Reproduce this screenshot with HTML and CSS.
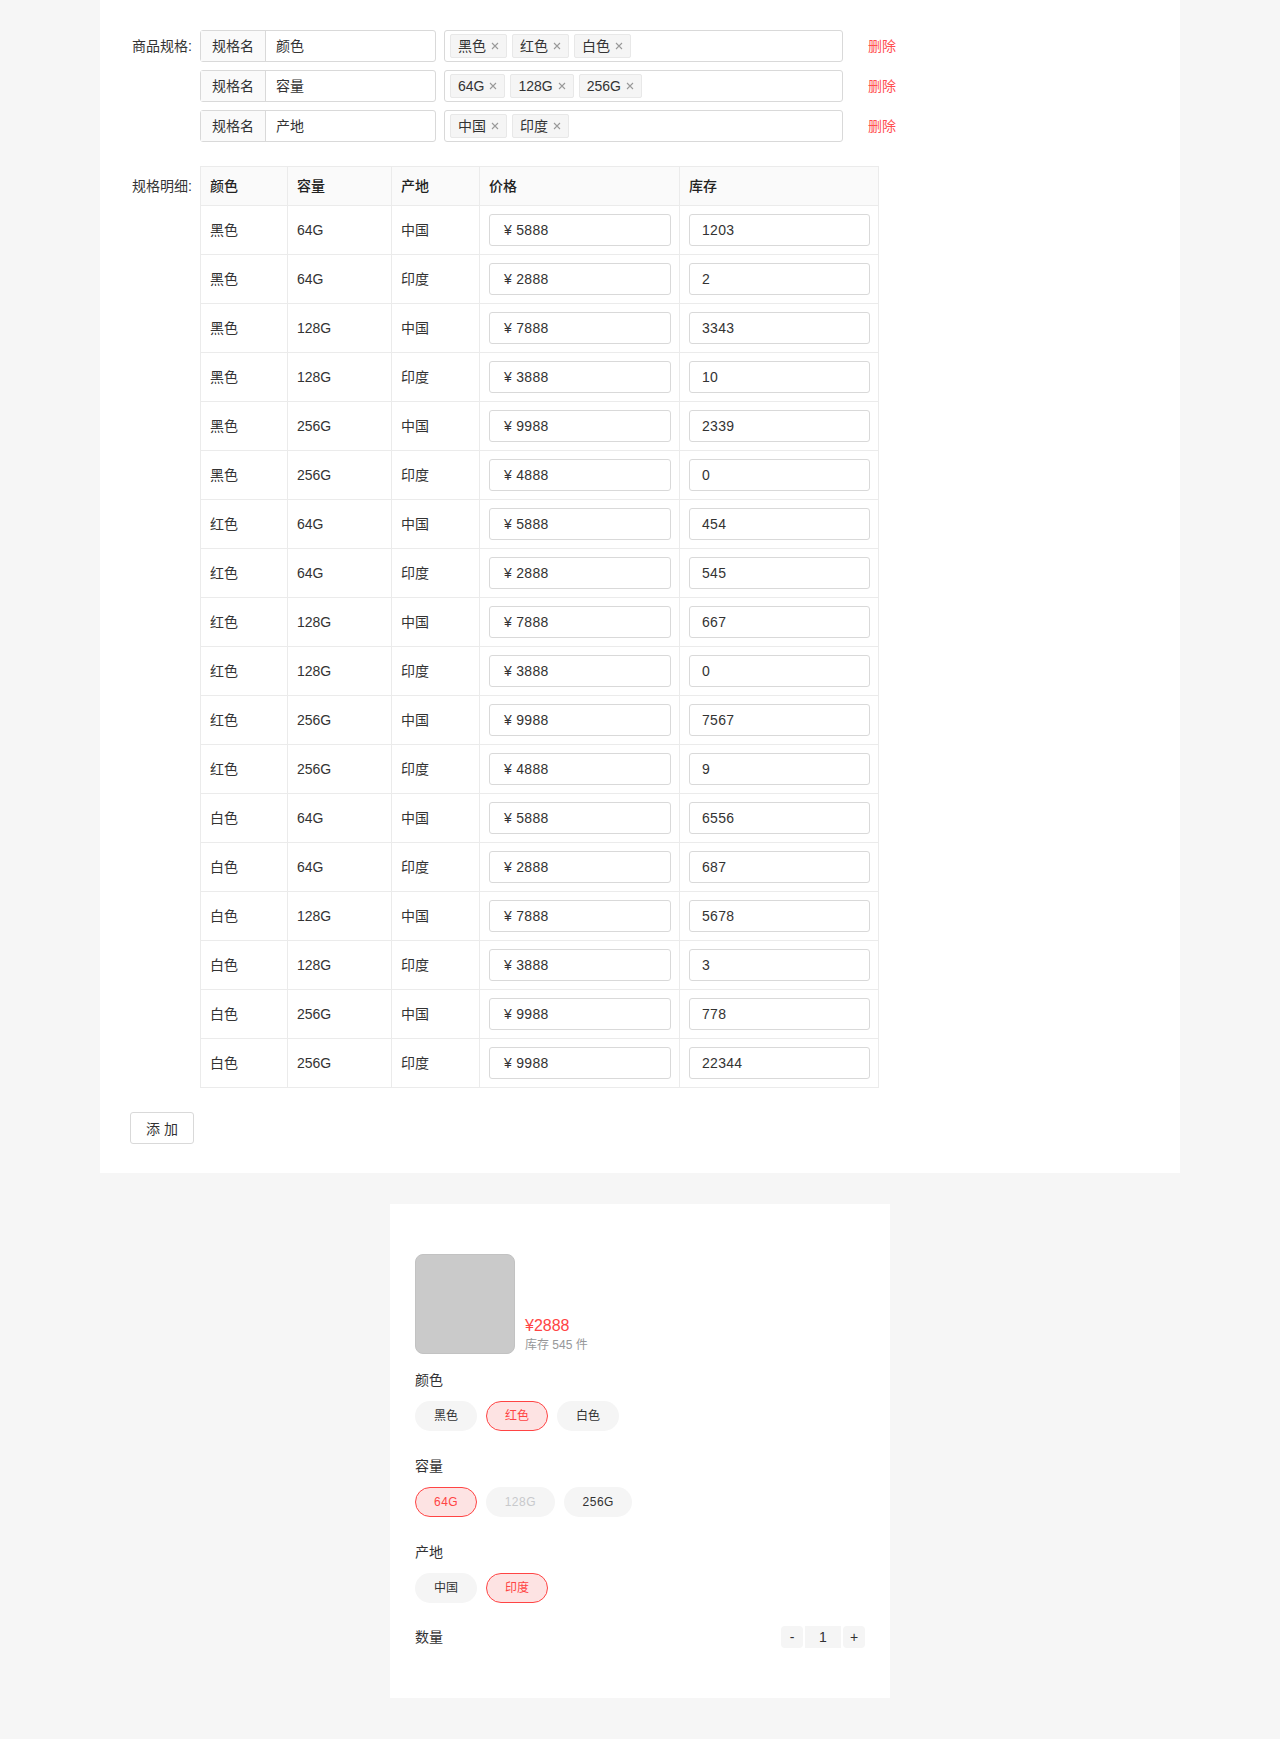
FILE: index.html
```html
<!DOCTYPE html>
<html lang="zh-CN">
<head>
<meta charset="utf-8">
<title>商品规格</title>
<link rel="stylesheet" href="styles.css">
</head>
<body>
<div class="panel">
  <div class="form-row">
    <div class="form-label spec-label">商品规格:</div>
    <div class="spec-list">
      <div class="spec-row">
        <div class="input-group"><span class="addon">规格名</span><span class="ig-input">颜色</span></div>
        <div class="tag-box">
          <span class="tag">黑色<svg class="x" viewBox="0 0 8 8"><path d="M1 1L7 7M7 1L1 7"/></svg></span>
          <span class="tag">红色<svg class="x" viewBox="0 0 8 8"><path d="M1 1L7 7M7 1L1 7"/></svg></span>
          <span class="tag">白色<svg class="x" viewBox="0 0 8 8"><path d="M1 1L7 7M7 1L1 7"/></svg></span>
        </div>
        <a class="del">删除</a>
      </div>
      <div class="spec-row">
        <div class="input-group"><span class="addon">规格名</span><span class="ig-input">容量</span></div>
        <div class="tag-box">
          <span class="tag">64G<svg class="x" viewBox="0 0 8 8"><path d="M1 1L7 7M7 1L1 7"/></svg></span>
          <span class="tag">128G<svg class="x" viewBox="0 0 8 8"><path d="M1 1L7 7M7 1L1 7"/></svg></span>
          <span class="tag">256G<svg class="x" viewBox="0 0 8 8"><path d="M1 1L7 7M7 1L1 7"/></svg></span>
        </div>
        <a class="del">删除</a>
      </div>
      <div class="spec-row">
        <div class="input-group"><span class="addon">规格名</span><span class="ig-input">产地</span></div>
        <div class="tag-box">
          <span class="tag">中国<svg class="x" viewBox="0 0 8 8"><path d="M1 1L7 7M7 1L1 7"/></svg></span>
          <span class="tag">印度<svg class="x" viewBox="0 0 8 8"><path d="M1 1L7 7M7 1L1 7"/></svg></span>
        </div>
        <a class="del">删除</a>
      </div>
    </div>
  </div>

  <div class="form-row detail-row">
    <div class="form-label detail-label">规格明细:</div>
    <table class="sku-table">
      <colgroup><col class="c1"><col class="c2"><col class="c3"><col class="c4"><col class="c5"></colgroup>
      <thead><tr><th>颜色</th><th>容量</th><th>产地</th><th>价格</th><th>库存</th></tr></thead>
      <tbody>
        <tr><td>黑色</td><td>64G</td><td>中国</td><td><div class="cell-input price">¥ 5888</div></td><td><div class="cell-input">1203</div></td></tr>
        <tr><td>黑色</td><td>64G</td><td>印度</td><td><div class="cell-input price">¥ 2888</div></td><td><div class="cell-input">2</div></td></tr>
        <tr><td>黑色</td><td>128G</td><td>中国</td><td><div class="cell-input price">¥ 7888</div></td><td><div class="cell-input">3343</div></td></tr>
        <tr><td>黑色</td><td>128G</td><td>印度</td><td><div class="cell-input price">¥ 3888</div></td><td><div class="cell-input">10</div></td></tr>
        <tr><td>黑色</td><td>256G</td><td>中国</td><td><div class="cell-input price">¥ 9988</div></td><td><div class="cell-input">2339</div></td></tr>
        <tr><td>黑色</td><td>256G</td><td>印度</td><td><div class="cell-input price">¥ 4888</div></td><td><div class="cell-input">0</div></td></tr>
        <tr><td>红色</td><td>64G</td><td>中国</td><td><div class="cell-input price">¥ 5888</div></td><td><div class="cell-input">454</div></td></tr>
        <tr><td>红色</td><td>64G</td><td>印度</td><td><div class="cell-input price">¥ 2888</div></td><td><div class="cell-input">545</div></td></tr>
        <tr><td>红色</td><td>128G</td><td>中国</td><td><div class="cell-input price">¥ 7888</div></td><td><div class="cell-input">667</div></td></tr>
        <tr><td>红色</td><td>128G</td><td>印度</td><td><div class="cell-input price">¥ 3888</div></td><td><div class="cell-input">0</div></td></tr>
        <tr><td>红色</td><td>256G</td><td>中国</td><td><div class="cell-input price">¥ 9988</div></td><td><div class="cell-input">7567</div></td></tr>
        <tr><td>红色</td><td>256G</td><td>印度</td><td><div class="cell-input price">¥ 4888</div></td><td><div class="cell-input">9</div></td></tr>
        <tr><td>白色</td><td>64G</td><td>中国</td><td><div class="cell-input price">¥ 5888</div></td><td><div class="cell-input">6556</div></td></tr>
        <tr><td>白色</td><td>64G</td><td>印度</td><td><div class="cell-input price">¥ 2888</div></td><td><div class="cell-input">687</div></td></tr>
        <tr><td>白色</td><td>128G</td><td>中国</td><td><div class="cell-input price">¥ 7888</div></td><td><div class="cell-input">5678</div></td></tr>
        <tr><td>白色</td><td>128G</td><td>印度</td><td><div class="cell-input price">¥ 3888</div></td><td><div class="cell-input">3</div></td></tr>
        <tr><td>白色</td><td>256G</td><td>中国</td><td><div class="cell-input price">¥ 9988</div></td><td><div class="cell-input">778</div></td></tr>
        <tr><td>白色</td><td>256G</td><td>印度</td><td><div class="cell-input price">¥ 9988</div></td><td><div class="cell-input">22344</div></td></tr>
      </tbody>
    </table>
  </div>

  <button class="add-btn">添 加</button>
</div>

<div class="sku-card">
  <div class="sku-head">
    <div class="sku-img"></div>
    <div class="sku-info">
      <div class="sku-price">¥2888</div>
      <div class="sku-stock">库存 545 件</div>
    </div>
  </div>

  <div class="sku-group">
    <div class="sku-title">颜色</div>
    <div class="chips">
      <span class="chip">黑色</span>
      <span class="chip active">红色</span>
      <span class="chip">白色</span>
    </div>
  </div>
  <div class="sku-group">
    <div class="sku-title">容量</div>
    <div class="chips">
      <span class="chip latin active">64G</span>
      <span class="chip latin disabled">128G</span>
      <span class="chip latin">256G</span>
    </div>
  </div>
  <div class="sku-group">
    <div class="sku-title">产地</div>
    <div class="chips">
      <span class="chip">中国</span>
      <span class="chip active">印度</span>
    </div>
  </div>

  <div class="qty-row">
    <div class="sku-title">数量</div>
    <div class="stepper">
      <span class="step-btn minus">-</span>
      <span class="step-input">1</span>
      <span class="step-btn plus">+</span>
    </div>
  </div>
</div>
</body>
</html>
```

FILE: styles.css
```css
* { box-sizing: border-box; }

body {
  margin: 0;
  background: #f6f6f6;
  font-family: "Liberation Sans", Arial, "Noto Sans CJK SC", sans-serif;
  font-size: 14px;
  color: #333;
}

.panel {
  width: 1080px;
  margin: 0 auto;
  background: #fff;
  padding: 30px 30px 29px;
}

.form-row {
  display: flex;
  align-items: flex-start;
}

.form-label {
  width: 70px;
  flex: none;
  text-align: right;
  padding-right: 8px;
  color: #333;
  white-space: nowrap;
}

.spec-label { line-height: 32px; }
.detail-label { line-height: 40px; }

.spec-list {
  display: flex;
  flex-direction: column;
  gap: 8px;
}

.spec-row {
  display: flex;
  align-items: center;
  height: 32px;
}

.input-group {
  display: flex;
  width: 236px;
  height: 32px;
  border: 1px solid #d9d9d9;
  border-radius: 3px;
  line-height: 30px;
}

.addon {
  width: 65px;
  flex: none;
  background: #fafafa;
  border-right: 1px solid #d9d9d9;
  padding-left: 11px;
  color: #333;
}

.ig-input {
  padding-left: 10px;
  color: #333;
}

.tag-box {
  margin-left: 8px;
  width: 399px;
  height: 32px;
  border: 1px solid #d9d9d9;
  border-radius: 3px;
  padding: 3px 5px;
  display: flex;
  gap: 5px;
}

.tag {
  display: inline-flex;
  align-items: center;
  height: 24px;
  padding: 0 7px 0 7px;
  background: #f5f5f5;
  border: 1px solid #e8e8e8;
  border-radius: 2px;
  color: #333;
  line-height: 22px;
}

.tag .x {
  width: 8px;
  height: 8px;
  margin-left: 5px;
  stroke: #999;
  stroke-width: 1.1;
  fill: none;
}

.del {
  margin-left: 25px;
  color: #ff4d4f;
  line-height: 32px;
}

.detail-row { margin-top: 24px; }

.sku-table {
  width: 678px;
  table-layout: fixed;
  border-collapse: collapse;
  border: 1px solid #ebebeb;
}

.c1 { width: 87px; }
.c2 { width: 104px; }
.c3 { width: 88px; }
.c4 { width: 200px; }
.c5 { width: 199px; }

.sku-table th,
.sku-table td {
  border: 1px solid #ebebeb;
  text-align: left;
  padding: 8px 8px;
}

.sku-table th {
  background: #fafafa;
  font-weight: 500;
  color: #222;
  line-height: 22px;
  padding-left: 9px;
}

.sku-table td {
  line-height: 32px;
  padding-left: 9px;
}

.cell-input {
  height: 32px;
  border: 1px solid #d9d9d9;
  border-radius: 3px;
  line-height: 30px;
  padding-left: 12px;
  color: #333;
  letter-spacing: 0.3px;
}

.cell-input.price { padding-left: 14px; }

.add-btn {
  display: block;
  margin-top: 24px;
  width: 64px;
  height: 32px;
  background: #fff;
  border: 1px solid #d9d9d9;
  border-radius: 3px;
  font-family: inherit;
  font-size: 14px;
  color: #333;
  padding: 0;
}

/* SKU card */
.sku-card {
  width: 500px;
  margin: 31px auto 39px;
  background: #fff;
  padding: 50px 25px;
}

.sku-head {
  display: flex;
  align-items: flex-end;
}

.sku-img {
  width: 100px;
  height: 100px;
  border-radius: 8px;
  background: #cacaca;
  border: 1px solid #c2c2c2;
}

.sku-info { margin-left: 10px; }

.sku-price {
  color: #f44;
  font-size: 16px;
  line-height: 20px;
}

.sku-stock {
  color: #969799;
  font-size: 12px;
  line-height: 18px;
}

.sku-group { margin-top: 16px; }
.sku-group + .sku-group { margin-top: 25px; }

.sku-title {
  font-size: 14px;
  line-height: 20px;
  color: #323233;
}

.chips {
  display: flex;
  gap: 9px;
  margin-top: 11px;
}

.chip {
  height: 30px;
  line-height: 28px;
  padding: 0 18px;
  border-radius: 15px;
  background: #f5f5f5;
  border: 1px solid transparent;
  font-size: 12px;
  color: #323233;
}

.chip.latin { letter-spacing: 0.5px; padding: 0 17.5px 0 18px; }

.chip.active {
  background: #fde3e3;
  border-color: #f44;
  color: #f44;
}

.chip.disabled { color: #c8c9cc; }

.qty-row {
  margin-top: 23px;
  display: flex;
  align-items: center;
  justify-content: space-between;
  height: 22px;
}

.stepper {
  display: flex;
  gap: 2px;
}

.step-btn,
.step-input {
  height: 22px;
  line-height: 22px;
  background: #f5f5f5;
  text-align: center;
  color: #323233;
}

.step-btn {
  width: 22px;
  border-radius: 4px;
  font-size: 14px;
}

.step-input {
  width: 36px;
  font-size: 14px;
}
```
